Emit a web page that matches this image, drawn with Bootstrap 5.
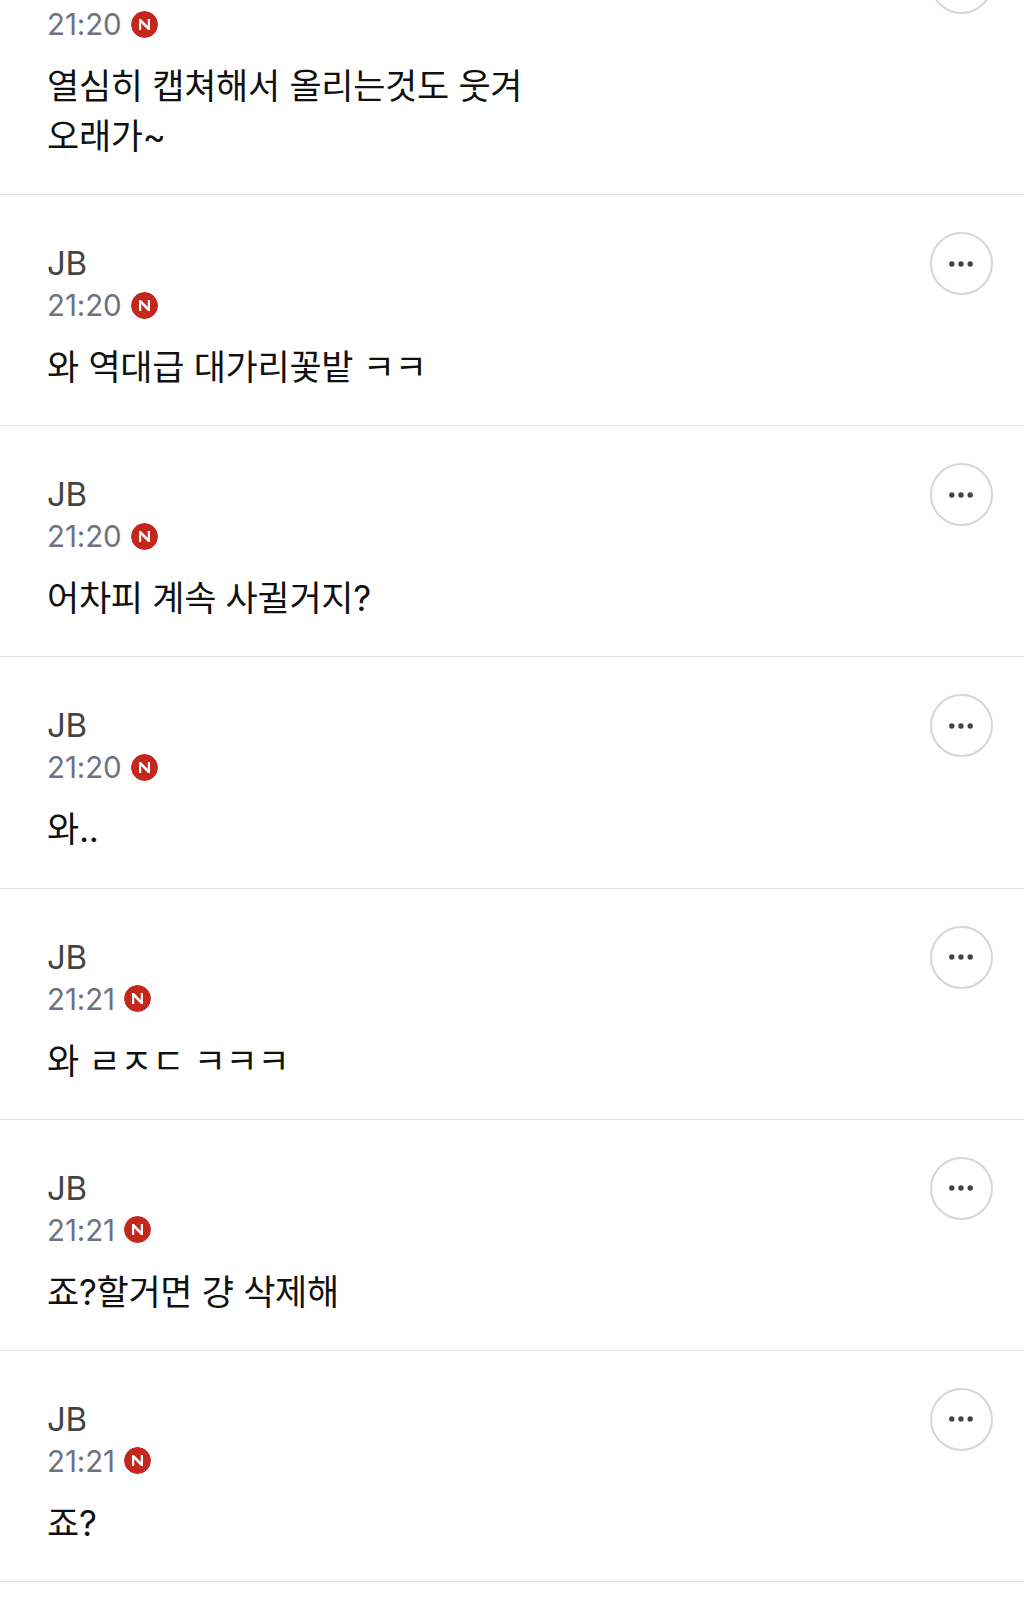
<!DOCTYPE html>
<html lang="ko"><head><meta charset="utf-8">
<link href="https://cdn.jsdelivr.net/npm/bootstrap@5.3.0/dist/css/bootstrap.min.css" rel="stylesheet">
<style>
html,body{height:1601px;overflow:hidden;background:#fff}
body{font-family:Inter,"Noto Sans CJK KR",sans-serif}
.feed{margin-top:-86px}
.entry{border-bottom:1px solid #e2e2e2;padding:37px 31.5px 0 47px;height:231.2px}
.entry.tall{height:281px}
.copy{padding-top:9px}
.who{font-size:33px;line-height:44px;color:#444;height:44px;letter-spacing:-.4px}
.meta{font-size:29.5px;line-height:42px;color:#6f7280;height:40px;gap:9px;letter-spacing:-.1px}
.nbadge{width:27px;height:27px;flex:none}
.say{font-size:35px;line-height:50px;color:#111;margin-top:17px;letter-spacing:-.3px}
.more{width:63px;height:63px;border:2px solid #d6d6d6;background:#fff;padding:0;flex:none}
</style></head><body>
<svg width="0" height="0" class="d-block"><defs>
<symbol id="nb" viewBox="0 0 27 27"><circle cx="13.5" cy="13.5" r="13.5" fill="#c4281c"/><path d="M8 19V8h2l6.8 7V8H19v11h-2l-6.8-7v7z" fill="#fff"/></symbol>
<symbol id="dots" viewBox="0 0 26 6"><circle cx="3.8" cy="3" r="2.7"/><circle cx="13" cy="3" r="2.7"/><circle cx="22.2" cy="3" r="2.7"/></symbol>
</defs></svg>
<div class="feed">
<div class="entry tall d-flex justify-content-between align-items-start"><div class="copy"><div class="who">JB</div><div class="meta d-flex align-items-center"><span>21:20</span><svg class="nbadge rounded-circle" viewBox="0 0 27 27"><use href="#nb"/></svg></div><div class="say">열심히 캡쳐해서 올리는것도 웃겨<br>오래가~</div></div><button class="more btn rounded-circle d-flex align-items-center justify-content-center" type="button" aria-label="더보기"><svg width="26" height="6" fill="#444"><use href="#dots"/></svg></button></div>
<div class="entry d-flex justify-content-between align-items-start"><div class="copy"><div class="who">JB</div><div class="meta d-flex align-items-center"><span>21:20</span><svg class="nbadge rounded-circle" viewBox="0 0 27 27"><use href="#nb"/></svg></div><div class="say">와 역대급 대가리꽃밭 ㅋㅋ</div></div><button class="more btn rounded-circle d-flex align-items-center justify-content-center" type="button" aria-label="더보기"><svg width="26" height="6" fill="#444"><use href="#dots"/></svg></button></div>
<div class="entry d-flex justify-content-between align-items-start"><div class="copy"><div class="who">JB</div><div class="meta d-flex align-items-center"><span>21:20</span><svg class="nbadge rounded-circle" viewBox="0 0 27 27"><use href="#nb"/></svg></div><div class="say">어차피 계속 사귈거지?</div></div><button class="more btn rounded-circle d-flex align-items-center justify-content-center" type="button" aria-label="더보기"><svg width="26" height="6" fill="#444"><use href="#dots"/></svg></button></div>
<div class="entry d-flex justify-content-between align-items-start"><div class="copy"><div class="who">JB</div><div class="meta d-flex align-items-center"><span>21:20</span><svg class="nbadge rounded-circle" viewBox="0 0 27 27"><use href="#nb"/></svg></div><div class="say">와..</div></div><button class="more btn rounded-circle d-flex align-items-center justify-content-center" type="button" aria-label="더보기"><svg width="26" height="6" fill="#444"><use href="#dots"/></svg></button></div>
<div class="entry d-flex justify-content-between align-items-start"><div class="copy"><div class="who">JB</div><div class="meta d-flex align-items-center"><span>21:21</span><svg class="nbadge rounded-circle" viewBox="0 0 27 27"><use href="#nb"/></svg></div><div class="say">와 ㄹㅈㄷ ㅋㅋㅋ</div></div><button class="more btn rounded-circle d-flex align-items-center justify-content-center" type="button" aria-label="더보기"><svg width="26" height="6" fill="#444"><use href="#dots"/></svg></button></div>
<div class="entry d-flex justify-content-between align-items-start"><div class="copy"><div class="who">JB</div><div class="meta d-flex align-items-center"><span>21:21</span><svg class="nbadge rounded-circle" viewBox="0 0 27 27"><use href="#nb"/></svg></div><div class="say">죠?할거면 걍 삭제해</div></div><button class="more btn rounded-circle d-flex align-items-center justify-content-center" type="button" aria-label="더보기"><svg width="26" height="6" fill="#444"><use href="#dots"/></svg></button></div>
<div class="entry d-flex justify-content-between align-items-start"><div class="copy"><div class="who">JB</div><div class="meta d-flex align-items-center"><span>21:21</span><svg class="nbadge rounded-circle" viewBox="0 0 27 27"><use href="#nb"/></svg></div><div class="say">죠?</div></div><button class="more btn rounded-circle d-flex align-items-center justify-content-center" type="button" aria-label="더보기"><svg width="26" height="6" fill="#444"><use href="#dots"/></svg></button></div>
</div>
<script src="https://cdn.jsdelivr.net/npm/bootstrap@5.3.0/dist/js/bootstrap.bundle.min.js"></script>
</body></html>
